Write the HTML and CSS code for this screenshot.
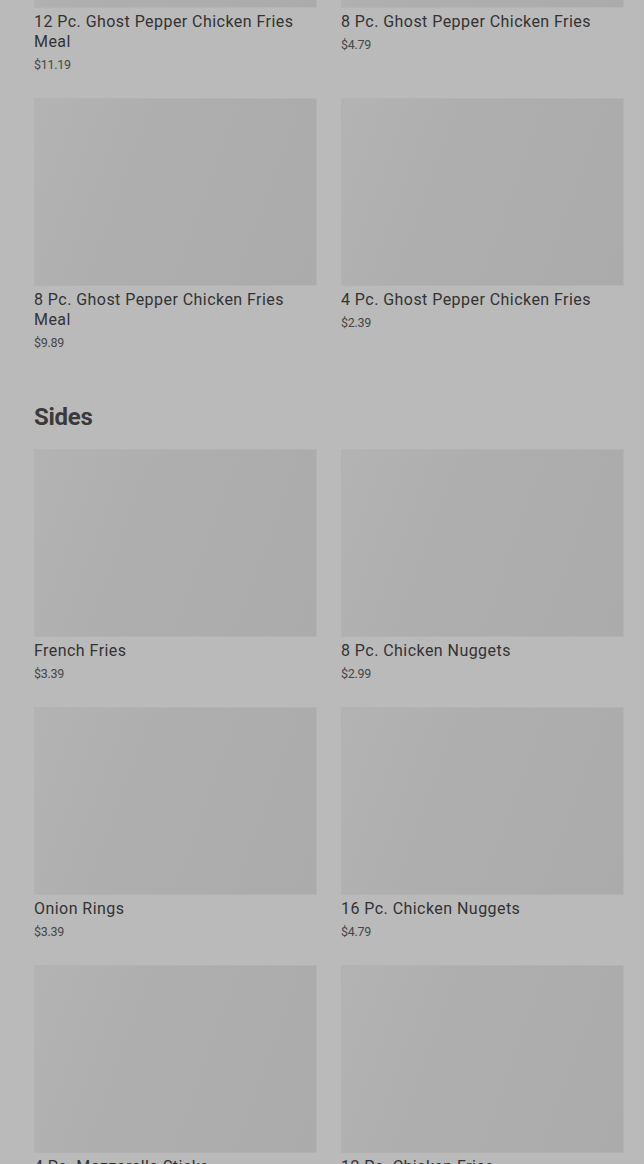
FILE: index.html
```html
<!DOCTYPE html>
<html lang="en">
<head>
    <meta charset="UTF-8">
    <meta name="viewport" content="width=device-width, initial-scale=1.0">
    <title>Menu</title>
    <link rel="stylesheet" href="styles.css">
</head>
<body>
    <div class="menu">

        <div class="section">
            <div class="grid">
                <div class="card">
                    <div class="thumb"></div>
                    <p class="name">12 Pc. Ghost Pepper Chicken Fries Meal</p>
                    <p class="price">$11.19</p>
                </div>
                <div class="card">
                    <div class="thumb"></div>
                    <p class="name">8 Pc. Ghost Pepper Chicken Fries</p>
                    <p class="price">$4.79</p>
                </div>
                <div class="card">
                    <div class="thumb"></div>
                    <p class="name">8 Pc. Ghost Pepper Chicken Fries Meal</p>
                    <p class="price">$9.89</p>
                </div>
                <div class="card">
                    <div class="thumb"></div>
                    <p class="name">4 Pc. Ghost Pepper Chicken Fries</p>
                    <p class="price">$2.39</p>
                </div>
            </div>
        </div>

        <div class="section">
            <h2 class="sectionTitle">Sides</h2>
            <div class="grid">
                <div class="card">
                    <div class="thumb"></div>
                    <p class="name">French Fries</p>
                    <p class="price">$3.39</p>
                </div>
                <div class="card">
                    <div class="thumb"></div>
                    <p class="name">8 Pc. Chicken Nuggets</p>
                    <p class="price">$2.99</p>
                </div>
                <div class="card">
                    <div class="thumb"></div>
                    <p class="name">Onion Rings</p>
                    <p class="price">$3.39</p>
                </div>
                <div class="card">
                    <div class="thumb"></div>
                    <p class="name">16 Pc. Chicken Nuggets</p>
                    <p class="price">$4.79</p>
                </div>
                <div class="card">
                    <div class="thumb"></div>
                    <p class="name">4 Pc. Mozzarella Sticks</p>
                    <p class="price">$3.59</p>
                </div>
                <div class="card">
                    <div class="thumb"></div>
                    <p class="name">12 Pc. Chicken Fries</p>
                    <p class="price">$4.99</p>
                </div>
            </div>
        </div>

    </div>
</body>
</html>
```

FILE: styles.css
```css
*{
    margin: 0px;
    box-sizing: border-box;
}
body{
    background-color: #bababa;
    font-family: Roboto, "Liberation Sans", sans-serif;
    color: #373737;
    overflow: hidden;
}
.menu{
    margin-top: -180px;
    padding: 0px 20px 0px 34px;
}
.section{
    margin-bottom: 51px;
}
.sectionTitle{
    font-size: 24px;
    line-height: 30px;
    font-weight: 700;
    color: #3a3a3a;
    margin-bottom: 17px;
    letter-spacing: -0.3px;
}
.grid{
    display: grid;
    grid-template-columns: 1fr 1fr;
    column-gap: 24px;
    row-gap: 25px;
}
.thumb{
    height: 188px;
    border: 1px solid #b3b3b3;
    background: linear-gradient(110deg, #b3b3b3 0%, #aeaeae 40%, #ababab 100%);
}
.name{
    margin-top: 4px;
    font-size: 16px;
    line-height: 20px;
    font-weight: 400;
    letter-spacing: 0.45px;
    color: #333333;
}
.price{
    margin-top: 5px;
    font-size: 12.5px;
    line-height: 16px;
    color: #474747;
    letter-spacing: -0.3px;
}
```
